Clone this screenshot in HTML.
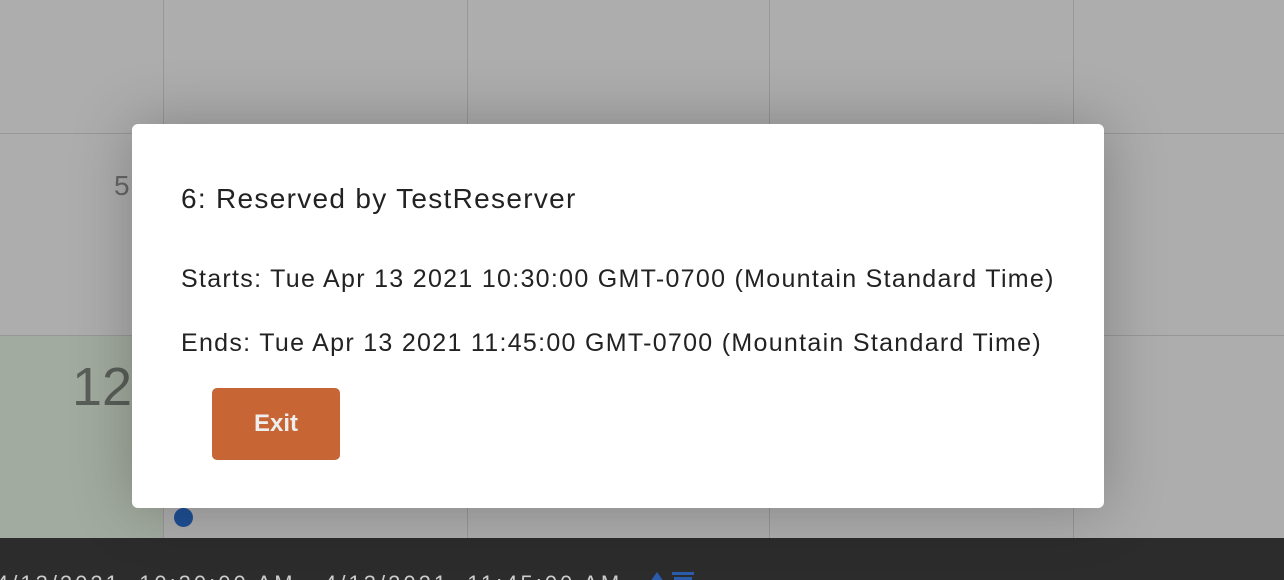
<!DOCTYPE html>
<html><head><style>
html,body{margin:0;width:1284px;height:580px;overflow:hidden}
body{position:relative;background:#adadad;font-family:"Liberation Sans",Roboto,sans-serif}
.v{position:absolute;top:0;width:1px;height:538px;background:#979797}
.h{position:absolute;left:0;width:1284px;height:1px;background:#979797}
.green{position:absolute;left:0;top:336px;width:163px;height:202px;background:#a2ab9f}
.bar{position:absolute;left:0;top:538px;width:1284px;height:42px;background:#2c2c2c;overflow:hidden}
.modal{position:absolute;left:132px;top:124px;width:972px;height:384px;background:#fff;border-radius:6px;box-shadow:0 0 60px rgba(0,0,0,.25)}
.t{position:absolute;left:49px;color:#222;white-space:nowrap}
.btn{position:absolute;left:80px;top:264px;width:128px;height:72px;background:#c76535;border-radius:5px;color:#eee;font-weight:bold;font-size:24px;text-align:center;line-height:72px}
</style></head><body>
<div class="green"></div>
<div class="v" style="left:163px"></div><div class="v" style="left:467px"></div><div class="v" style="left:769px"></div><div class="v" style="left:1073px"></div>
<div class="h" style="top:133px"></div><div class="h" style="top:335px"></div>
<div style="position:absolute;left:114px;top:170px;font-size:28px;color:#666">5</div>
<div style="position:absolute;left:72px;top:356px;font-size:54px;color:#595f58">12</div>
<div style="position:absolute;left:174px;top:508px;width:19px;height:19px;border-radius:50%;background:#1f4f94"></div>
<div class="bar"><div style="position:absolute;left:-4px;top:33px;color:#ccc;font-size:22px;letter-spacing:3px;white-space:nowrap">4/13/2021, 10:30:00 AM - 4/13/2021, 11:45:00 AM</div>
<div style="position:absolute;left:650px;top:34px;width:0;height:0;border-left:7px solid transparent;border-right:7px solid transparent;border-bottom:10px solid #2a5cab"></div>
<div style="position:absolute;left:672px;top:34px;width:22px;height:3px;background:#2a5cab"></div>
<div style="position:absolute;left:674px;top:39px;width:18px;height:6px;background:#2a5cab"></div>
</div>
<div class="modal">
<div class="t" style="top:59px;font-size:28px;letter-spacing:1.3px">6: Reserved by TestReserver</div>
<div class="t" style="top:141px;font-size:25px;letter-spacing:1.3px">Starts: Tue Apr 13 2021 10:30:00 GMT-0700 (Mountain Standard Time)</div>
<div class="t" style="top:205px;font-size:25px;letter-spacing:1.3px">Ends: Tue Apr 13 2021 11:45:00 GMT-0700 (Mountain Standard Time)</div>
<div class="btn">Exit</div>
</div>
</body></html>
